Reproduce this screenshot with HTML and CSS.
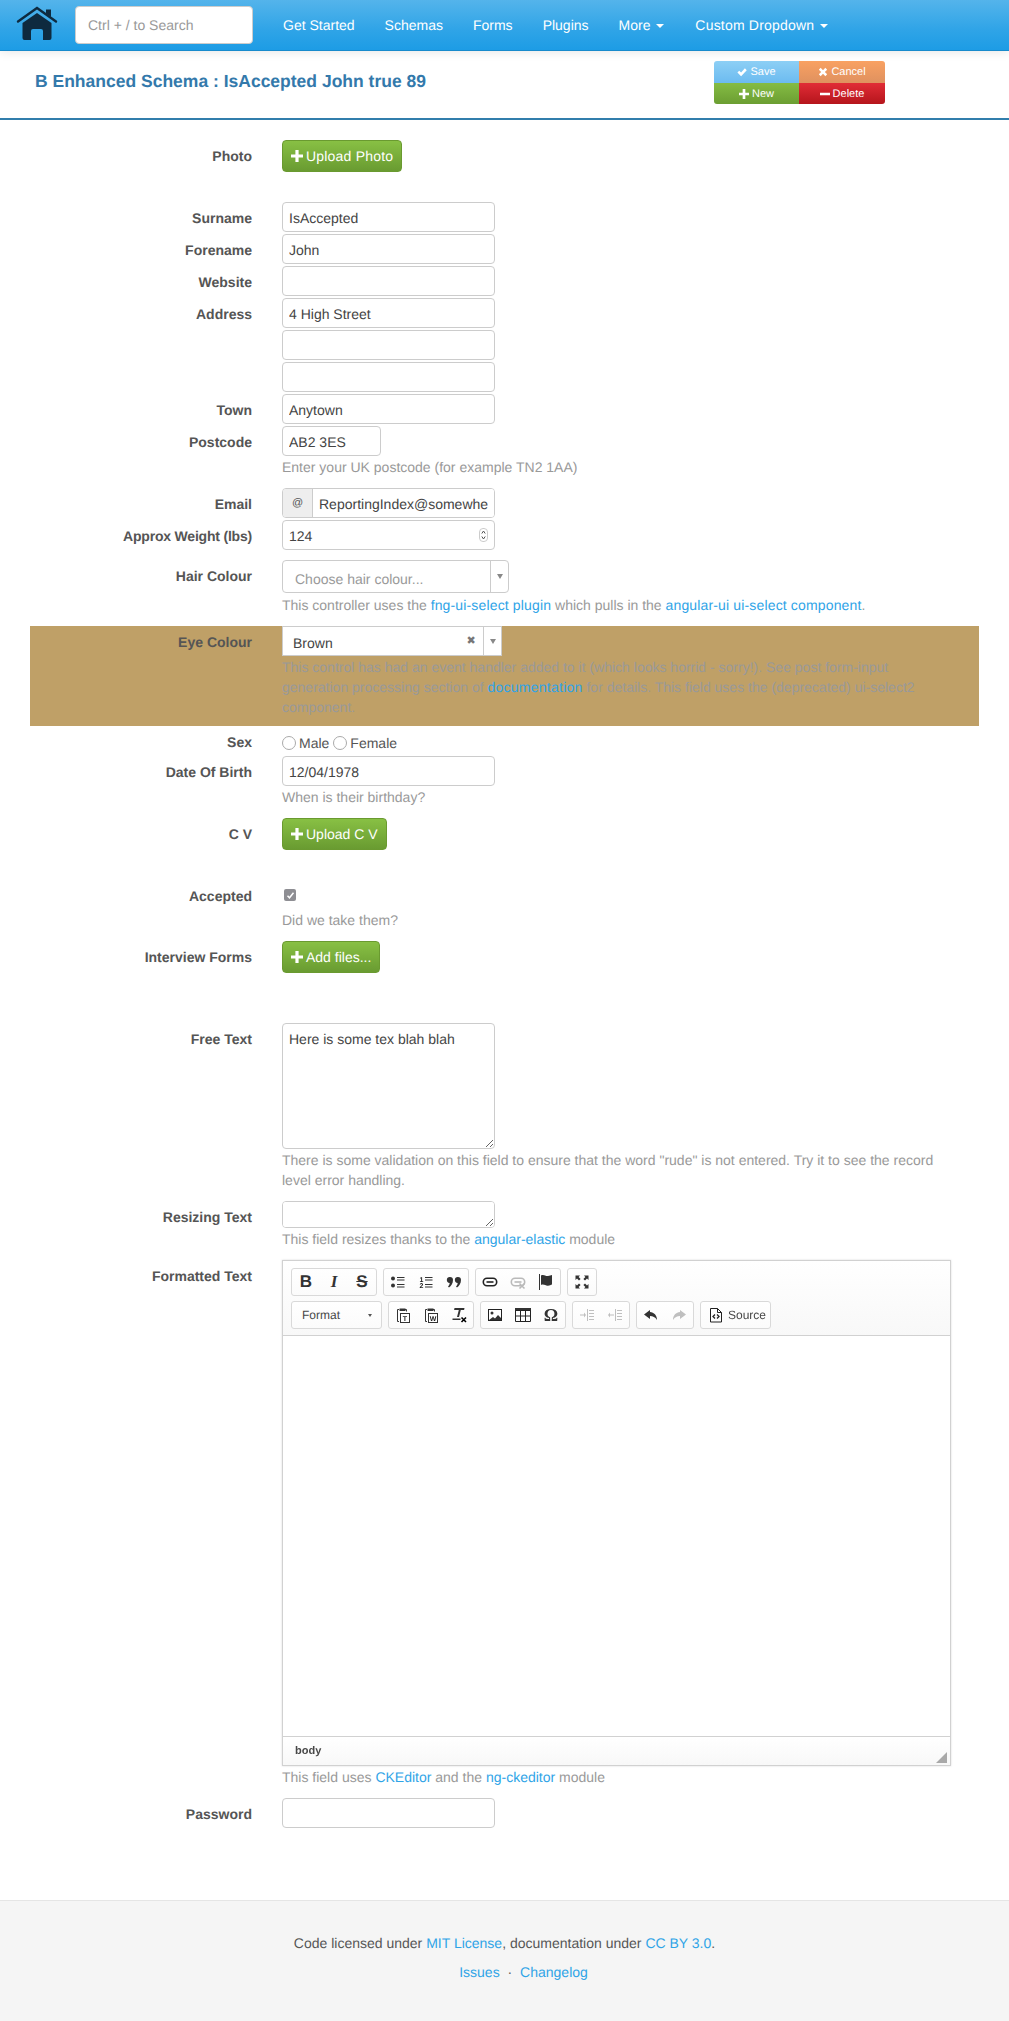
FILE: index.html
```html
<!DOCTYPE html>
<html lang="en">

<head>
    <meta charset="UTF-8">
    <title>B Enhanced Schema : IsAccepted John true 89</title>
    <link rel="stylesheet" href="styles.css">
</head>

<body>
    <svg class="sprite" aria-hidden="true">
        <symbol id="i-plus" viewBox="0 0 12 12"><path d="M4.400 0h3.200v4.400H12v3.200H7.600V12H4.400V7.600H0V4.400h4.400z"/></symbol>
        <symbol id="i-minus" viewBox="0 0 12 12"><path d="M0 4.400h12v3.200H0z"/></symbol>
        <symbol id="i-check" viewBox="0 0 12 12"><path d="M0.500 6.600l2.200-2.200 2.200 2.200 4.600-5 2.200 2.200-6.800 7.200z"/></symbol>
        <symbol id="i-cross" viewBox="0 0 12 12"><path d="M1 3.200l2.200-2.200L6 3.800 8.800 1 11 3.200 8.200 6 11 8.800 8.800 11 6 8.200 3.200 11 1 8.800 3.800 6z"/></symbol>
        <symbol id="i-link" viewBox="0 0 16 16"><rect x="1.300" y="4.300" width="13.400" height="7.400" rx="3.700" fill="none" stroke="#222" stroke-width="1.600"/><path d="M4.500 8h7" fill="none" stroke="#222" stroke-width="1.600"/></symbol>
    </svg>

    <nav class="navbar">
        <a class="brand" href="#">
            <svg width="42" height="36" viewBox="0 0 42 36">
                <path d="M2 15.500L21 2l19 13.500" fill="none" stroke="#0e2a3f" stroke-width="2.400" stroke-linecap="round"/>
                <path d="M30 3.500h5v7.500l-5-3.500z" fill="#0e2a3f"/>
                <path d="M21 7l14.500 10v15a2 2 0 0 1-2 2H27v-9a2 2 0 0 0-2-2h-8a2 2 0 0 0-2 2v9H8.500a2 2 0 0 1-2-2V17z" fill="#0e2a3f"/>
            </svg>
        </a>
        <input class="search" type="text" placeholder="Ctrl + / to Search">
        <ul class="nav-links">
            <li><a href="#">Get Started</a></li>
            <li><a href="#">Schemas</a></li>
            <li><a href="#">Forms</a></li>
            <li><a href="#">Plugins</a></li>
            <li><a href="#">More <b class="caret"></b></a></li>
            <li class="nav-last"><a href="#">Custom Dropdown <b class="caret"></b></a></li>
        </ul>
    </nav>

    <header class="page-head">
        <h1>B Enhanced Schema : IsAccepted John true 89</h1>
        <div class="actions">
            <a class="act act-save" href="#"><svg class="ico-s"><use href="#i-check"/></svg> Save</a>
            <a class="act act-cancel" href="#"><svg class="ico-s"><use href="#i-cross"/></svg> Cancel</a>
            <a class="act act-new" href="#"><svg class="ico-s"><use href="#i-plus"/></svg> New</a>
            <a class="act act-delete" href="#"><svg class="ico-s"><use href="#i-minus"/></svg> Delete</a>
        </div>
    </header>

    <form class="form">
        <div class="row row-upload">
            <label>Photo</label>
            <div class="ctl"><a class="btn-green btn-wide" href="#"><svg class="ico"><use href="#i-plus"/></svg>Upload Photo</a></div>
        </div>

        <div class="row"><label>Surname</label><div class="ctl"><input class="input" type="text" value="IsAccepted"></div></div>
        <div class="row"><label>Forename</label><div class="ctl"><input class="input" type="text" value="John"></div></div>
        <div class="row"><label>Website</label><div class="ctl"><input class="input" type="text"></div></div>
        <div class="row"><label>Address</label><div class="ctl"><input class="input" type="text" value="4 High Street"></div></div>
        <div class="row"><label></label><div class="ctl"><input class="input" type="text"></div></div>
        <div class="row"><label></label><div class="ctl"><input class="input" type="text"></div></div>
        <div class="row"><label>Town</label><div class="ctl"><input class="input" type="text" value="Anytown"></div></div>
        <div class="row">
            <label>Postcode</label>
            <div class="ctl">
                <input class="input input-short" type="text" value="AB2 3ES">
                <p class="help">Enter your UK postcode (for example TN2 1AA)</p>
            </div>
        </div>

        <div class="row">
            <label>Email</label>
            <div class="ctl">
                <div class="input-group">
                    <span class="addon">@</span>
                    <input type="text" value="ReportingIndex@somewhere.com">
                </div>
            </div>
        </div>
        <div class="row row-gap">
            <label class="label-tight">Approx Weight (lbs)</label>
            <div class="ctl">
                <div class="spin-wrap">
                    <input class="input" type="text" value="124">
                    <svg class="spin" width="9" height="14" viewBox="0 0 9 14">
                        <rect x="0.500" y="0.500" width="8" height="13" rx="3.500" fill="#fff" stroke="#ccc"/>
                        <path d="M2.800 5.500l1.700-2.500 1.700 2.500M2.800 8.500l1.700 2.500 1.700-2.500" fill="none" stroke="#555"/>
                    </svg>
                </div>
            </div>
        </div>

        <div class="row">
            <label>Hair Colour</label>
            <div class="ctl">
                <div class="select select-hair">
                    <span class="select-text placeholder">Choose hair colour...</span>
                    <span class="select-arrow"><b></b></span>
                </div>
                <p class="help help-tight">This controller uses the <a href="#">fng-ui-select plugin</a> which pulls in the <a href="#">angular-ui ui-select component</a>.</p>
            </div>
        </div>

        <div class="row row-band">
            <label>Eye Colour</label>
            <div class="ctl">
                <div class="select select-eye">
                    <span class="select-text">Brown</span>
                    <span class="select-clear">&#10006;</span>
                    <span class="select-arrow"><b></b></span>
                </div>
                <p class="help">This control has had an event handler added to it (which looks horrid - sorry!). See post form-input generation processing section of <a href="#">documentation</a> for details. This field uses the (deprecated) ui-select2 component.</p>
            </div>
        </div>

        <div class="row row-sex">
            <label>Sex</label>
            <div class="ctl radios">
                <input type="radio" name="sex" id="male"><label for="male">Male</label>
                <input type="radio" name="sex" id="female"><label for="female">Female</label>
            </div>
        </div>
        <div class="row">
            <label>Date Of Birth</label>
            <div class="ctl">
                <input class="input" type="text" value="12/04/1978">
                <p class="help">When is their birthday?</p>
            </div>
        </div>
        <div class="row row-upload">
            <label>C V</label>
            <div class="ctl"><a class="btn-green" href="#"><svg class="ico"><use href="#i-plus"/></svg>Upload C V</a></div>
        </div>
        <div class="row">
            <label>Accepted</label>
            <div class="ctl">
                <div class="check-line">
                    <span class="check"><svg width="9" height="9" viewBox="0 0 9 9"><path d="M1.500 4.800l2 2 4-5" fill="none" stroke="#fff" stroke-width="1.500"/></svg></span>
                </div>
                <p class="help help-flush">Did we take them?</p>
            </div>
        </div>
        <div class="row row-upload-lg">
            <label>Interview Forms</label>
            <div class="ctl"><a class="btn-green" href="#"><svg class="ico"><use href="#i-plus"/></svg>Add files...</a></div>
        </div>

        <div class="row">
            <label>Free Text</label>
            <div class="ctl">
                <textarea class="input area-free">Here is some tex blah blah</textarea>
                <p class="help">There is some validation on this field to ensure that the word "rude" is not entered. Try it to see the record level error handling.</p>
            </div>
        </div>
        <div class="row">
            <label>Resizing Text</label>
            <div class="ctl">
                <textarea class="input area-small"></textarea>
                <p class="help">This field resizes thanks to the <a href="#">angular-elastic</a> module</p>
            </div>
        </div>

        <div class="row">
            <label>Formatted Text</label>
            <div class="ctl">
                <div class="editor">
                    <div class="ed-top">
                        <div class="ed-row">
                            <div class="ed-group">
                                <span class="ed-btn ed-b">B</span>
                                <span class="ed-btn ed-i">I</span>
                                <span class="ed-btn ed-s">S</span>
                            </div>
                            <div class="ed-group">
                                <span class="ed-btn"><svg width="16" height="16" viewBox="0 0 16 16"><circle cx="3" cy="4.500" r="2"/><circle cx="3" cy="11.500" r="2"/><path d="M7 3h7.500v1H7zM7 5.500h7.500v1H7zM7 10h7.500v1H7zM7 12.500h7.500v1H7z"/></svg></span>
                                <span class="ed-btn"><svg width="16" height="16" viewBox="0 0 16 16"><text x="3.500" y="7.500" class="ed-mini">1</text><text x="3.500" y="14" class="ed-mini">2</text><path d="M7 3h7.500v1H7zM7 5.500h7.500v1H7zM7 10h7.500v1H7zM7 12.500h7.500v1H7z"/></svg></span>
                                <span class="ed-btn"><svg width="16" height="16" viewBox="0 0 16 16"><path d="M4 3a3 3 0 0 1 3 3c0 3.500-2 6-4 7.500L2 12.500C3 11.500 3.500 10.500 3.700 9A3 3 0 0 1 4 3zM12 3a3 3 0 0 1 3 3c0 3.500-2 6-4 7.500l-1-1c1-1 1.500-2 1.700-3.500A3 3 0 0 1 12 3z"/></svg></span>
                            </div>
                            <div class="ed-group">
                                <span class="ed-btn"><svg width="16" height="16"><use href="#i-link"/></svg></span>
                                <span class="ed-btn ed-off"><svg width="16" height="16" viewBox="0 0 16 16"><use href="#i-link" width="16" height="16"/><path d="M9.500 9.500l5 5m0-5l-5 5" fill="none" stroke="#222" stroke-width="1.600"/></svg></span>
                                <span class="ed-btn"><svg width="16" height="16" viewBox="0 0 16 16"><path d="M1 0h1v16H1zM3 1.500c3-1.500 4.500 1 7 .5 1.500-.2 3-.7 4-1v9.500c-1 .5-2.500 1-4 1.200-2.500.3-4-2-7-.7z"/></svg></span>
                            </div>
                            <div class="ed-group">
                                <span class="ed-btn"><svg width="16" height="16" viewBox="0 0 16 16"><path d="M1.500 1.500H6L4.600 3l2 2L5 6.600l-2-2L1.500 6zM14.500 1.500V6L13 4.600l-2 2L9.400 5l2-2L10 1.500zM1.500 14.500V10L3 11.400l2-2L6.600 11l-2 2L6 14.500zM14.500 14.500H10l1.400-1.500-2-2L11 9.400l2 2 1.500-1.400z"/></svg></span>
                            </div>
                        </div>
                        <div class="ed-row">
                            <div class="ed-group ed-combo"><span>Format</span><b class="ed-caret"></b></div>
                            <div class="ed-group">
                                <span class="ed-btn"><svg width="16" height="16" viewBox="0 0 16 16"><path d="M4 2.500H2.500v12H4M11.500 4.500v-2H10" fill="none" stroke="#333"/><path d="M4.500 1.500h6V4h-6z" fill="#333"/><rect x="5.500" y="6.500" width="9" height="9" fill="#fff" stroke="#333"/><text x="10" y="14" class="ed-mini">T</text></svg></span>
                                <span class="ed-btn"><svg width="16" height="16" viewBox="0 0 16 16"><path d="M4 2.500H2.500v12H4M11.500 4.500v-2H10" fill="none" stroke="#333"/><path d="M4.500 1.500h6V4h-6z" fill="#333"/><rect x="5.500" y="6.500" width="9" height="9" fill="#fff" stroke="#333"/><text x="10" y="14" class="ed-mini">W</text></svg></span>
                                <span class="ed-btn"><svg width="16" height="16" viewBox="0 0 16 16"><path d="M3.500 1h10l-.4 2H9.800L8 10H6l1.800-7H3.100zM1.500 11.500h8V13h-8z"/><path d="M10.500 10.500l4.500 4.500m0-4.500L10.500 15" fill="none" stroke="#000" stroke-width="1.600"/></svg></span>
                            </div>
                            <div class="ed-group">
                                <span class="ed-btn"><svg width="16" height="16" viewBox="0 0 16 16"><rect x="1.500" y="2.500" width="13" height="11" fill="#fff" stroke="#222"/><circle cx="5" cy="6" r="1.500"/><path d="M2 13l4-3 2 1.500L11 8l3 3v2z"/></svg></span>
                                <span class="ed-btn"><svg width="16" height="16" viewBox="0 0 16 16"><path d="M0 1h16v3H0z"/><path d="M.5 3.500h15v11H.500zM5.500 4v10M10.500 4v10M1 9h14" fill="none" stroke="#222"/></svg></span>
                                <span class="ed-btn ed-omega">&#937;</span>
                            </div>
                            <div class="ed-group">
                                <span class="ed-btn ed-off"><svg width="16" height="16" viewBox="0 0 16 16"><path d="M8 2h1v12H8zM10 3h5v1h-5zM10 6h5v1h-5zM10 9h5v1h-5zM10 12h5v1h-5zM1 7.500h4V5.500L7 8l-2 2.500v-2H1z"/></svg></span>
                                <span class="ed-btn ed-off"><svg width="16" height="16" viewBox="0 0 16 16"><path d="M8 2h1v12H8zM10 3h5v1h-5zM10 6h5v1h-5zM10 9h5v1h-5zM10 12h5v1h-5zM7 7.500H3V5.500L1 8l2 2.500v-2h4z"/></svg></span>
                            </div>
                            <div class="ed-group">
                                <span class="ed-btn"><svg width="16" height="16" viewBox="0 0 16 16"><path d="M7 3L1 7.500 7 12V9c3 0 5 1 7 4 0-5-3-7.500-7-8z"/></svg></span>
                                <span class="ed-btn ed-off"><svg width="16" height="16" viewBox="0 0 16 16"><path d="M9 3l6 4.500L9 12V9c-3 0-5 1-7 4 0-5 3-7.500 7-8z"/></svg></span>
                            </div>
                            <div class="ed-group ed-source">
                                <svg width="16" height="16" viewBox="0 0 16 16"><path d="M2.500 1.500h7l4 4v9.500h-11zM9.500 1.500v4h4" fill="none" stroke="#222"/><path d="M7 7.500l-2 2 2 2M9 7.500l2 2-2 2" fill="none" stroke="#222" stroke-width="1.300"/></svg>
                                <span>Source</span>
                            </div>
                        </div>
                    </div>
                    <div class="ed-body"></div>
                    <div class="ed-status">
                        <span>body</span>
                        <svg width="11" height="11" viewBox="0 0 11 11"><path d="M11 0v11H0z" fill="#a9a9a9"/></svg>
                    </div>
                </div>
                <p class="help">This field uses <a href="#">CKEditor</a> and the <a href="#">ng-ckeditor</a> module</p>
            </div>
        </div>

        <div class="row">
            <label>Password</label>
            <div class="ctl"><input class="input" type="password"></div>
        </div>
    </form>

    <footer class="footer">
        <p>Code licensed under <a href="#">MIT License</a>, documentation under <a href="#">CC BY 3.0</a>.</p>
        <p class="footer-links"><a href="#">Issues</a> <span class="dot">&middot;</span> <a href="#">Changelog</a></p>
    </footer>
</body>

</html>
```

FILE: styles.css
```css
* {
    box-sizing: border-box;
}

body {
    margin: 0;
    font-family: "Liberation Sans", Arial, sans-serif;
    font-size: 14px;
    line-height: 20px;
    color: #555;
    background-color: #fff;
    text-rendering: geometricPrecision;
}

input,
textarea {
    text-rendering: geometricPrecision;
}

a {
    color: #2fa4e7;
    text-decoration: none;
}

.sprite {
    display: none;
}

/* top bar */
.navbar {
    position: relative;
    display: flex;
    align-items: center;
    height: 51px;
    padding-left: 16px;
    background: linear-gradient(#54b4eb, #2fa4e7 60%, #1d9ce5);
    border-bottom: 1px solid #178acc;
    box-shadow: 0 1px 10px rgba(0, 0, 0, 0.1);
}

.brand {
    display: flex;
    width: 42px;
    margin-top: -3px;
}

.search {
    width: 178px;
    height: 38px;
    margin-left: 17px;
    margin-top: -1px;
    padding: 0 12px;
    border: 1px solid #ccc;
    border-radius: 4px;
    font: inherit;
    color: #555;
}

.search::placeholder {
    color: #999;
}

.nav-links {
    display: flex;
    margin: 0 0 0 15px;
    padding: 0;
    list-style: none;
}

.nav-links a {
    display: block;
    padding: 0 15px;
    color: #fff;
    white-space: nowrap;
}

.nav-last {
    margin-left: 1px;
    letter-spacing: 0.2px;
}

.caret {
    display: inline-block;
    margin-left: 2px;
    vertical-align: middle;
    border-top: 4px solid #fff;
    border-left: 4px solid transparent;
    border-right: 4px solid transparent;
}

/* record title and actions */
.page-head {
    display: flex;
    align-items: flex-start;
    justify-content: space-between;
    height: 69px;
    padding: 10px 124px 0 35px;
    border-bottom: 2px solid #317eac;
}

.page-head h1 {
    margin: 10px 0 0;
    font-size: 17.500px;
    font-weight: bold;
    line-height: 20px;
    color: #3379ab;
}

.actions {
    display: grid;
    grid-template-columns: 85px 86px;
    grid-template-rows: 22px 21px;
    border-radius: 3px;
    overflow: hidden;
}

.act {
    display: flex;
    align-items: center;
    justify-content: center;
    gap: 3px;
    font-size: 11px;
    color: #fff;
}

.act-save {
    background: linear-gradient(#8dcff5, #6cbbf0);
}

.act-cancel {
    background: linear-gradient(#f9a162, #df915f);
}

.act-new {
    background: linear-gradient(#85bc44, #6b9e32);
}

.act-delete {
    background: linear-gradient(#e12c36, #b5151c);
}

.ico-s {
    width: 10px;
    height: 10px;
    fill: #fff;
}

.ico {
    width: 12px;
    height: 12px;
    margin-right: 3px;
    fill: #fff;
}

/* form rows */
.form {
    margin: 0 30px;
    padding-top: 20px;
}

.row {
    display: grid;
    grid-template-columns: 222px 669px;
    column-gap: 30px;
    margin-bottom: 2px;
}

.row > label {
    padding-top: 6px;
    text-align: right;
    font-weight: bold;
}

.row > .label-tight {
    letter-spacing: -0.2px;
}

.row-upload {
    margin-bottom: 30px;
}

.row-upload-lg {
    margin-bottom: 50px;
}

.row-gap {
    margin-bottom: 10px;
}

.row-band {
    margin-bottom: 0;
    background-color: #bfa067;
    padding-bottom: 9px;
}

.row-band .help {
    margin-bottom: 0;
}

.row-band .help a {
    letter-spacing: 0.25px;
}

.row-sex {
    height: 28px;
}

.ctl {
    min-width: 0;
}

.input {
    display: block;
    width: 213px;
    height: 30px;
    padding: 5px 6px 3px;
    border: 1px solid #ccc;
    border-radius: 4px;
    font: inherit;
    color: #444;
    background-color: #fff;
}

.input-short {
    width: 99px;
}

.area-free {
    height: 126px;
}

.area-small {
    height: 27px;
}

.help {
    margin: 1px 0 9px;
    color: #999;
}

.help-tight {
    margin-top: 2px;
}

.help-tight a {
    letter-spacing: 0.15px;
}

.help-flush {
    margin-top: 0;
}

.btn-green {
    display: inline-flex;
    align-items: center;
    height: 32px;
    padding: 0 8px;
    border: 1px solid #6a9a30;
    border-radius: 4px;
    color: #fff;
    background: linear-gradient(#88c044, #699b31);
}

.btn-wide {
    letter-spacing: 0.2px;
}

/* email */
.input-group {
    display: flex;
    width: 213px;
    height: 30px;
    border: 1px solid #ccc;
    border-radius: 4px;
    overflow: hidden;
}

.addon {
    width: 30px;
    border-right: 1px solid #ccc;
    background-color: #eee;
    font-size: 11px;
    line-height: 28px;
    text-align: center;
}

.input-group input {
    flex: 1;
    min-width: 0;
    padding: 1px 6px 0;
    border: 0;
    font: inherit;
    color: #444;
}

/* number spinner */
.spin-wrap {
    position: relative;
    width: 213px;
}

.spin {
    position: absolute;
    right: 7px;
    top: 8px;
}

/* fake selects */
.select {
    display: flex;
    align-items: center;
    border: 1px solid #ccc;
    background-color: #fff;
}

.select-hair {
    width: 227px;
    height: 33px;
    border-radius: 4px;
}

.select-eye {
    width: 220px;
    height: 30px;
    border-radius: 0;
}

.select-text {
    flex: 1;
    padding-left: 10px;
    padding-top: 4px;
    color: #444;
}

.placeholder {
    padding-left: 12px;
    color: #999;
}

.select-clear {
    width: 24px;
    font-size: 11px;
    text-align: center;
    color: #777;
}

.select-arrow {
    display: flex;
    align-items: center;
    justify-content: center;
    width: 18px;
    height: 100%;
    border-left: 1px solid #ccc;
}

.select-arrow b {
    border-top: 5px solid #888;
    border-left: 3px solid transparent;
    border-right: 3px solid transparent;
}

/* radios and checkbox */
.radios {
    display: flex;
    align-items: center;
    height: 20px;
    margin-top: 7px;
}

.radios input {
    appearance: none;
    width: 14px;
    height: 14px;
    margin: 0 3px 0 0;
    border: 1px solid #aaa;
    border-radius: 50%;
    background-color: #fff;
}

.radios label {
    margin-right: 4px;
}

.check-line {
    display: flex;
    align-items: center;
    height: 30px;
    padding-left: 2px;
}

.check {
    display: flex;
    align-items: center;
    justify-content: center;
    width: 12px;
    height: 12px;
    border-radius: 2px;
    background-color: #8e8e93;
}

/* rich text editor */
.editor {
    width: 669px;
    height: 506px;
    display: flex;
    flex-direction: column;
    border: 1px solid #d1d1d1;
    box-shadow: 0 0 2px rgba(0, 0, 0, 0.15);
}

.ed-top {
    height: 75px;
    padding: 7px 8px 0;
    border-bottom: 1px solid #d1d1d1;
    background: linear-gradient(#fff, #f8f8f8);
}

.ed-row {
    display: flex;
    gap: 6px;
    height: 28px;
    margin-bottom: 5px;
}

.ed-group {
    display: flex;
    height: 28px;
    border: 1px solid #d9d9d9;
    border-radius: 3px;
    background: linear-gradient(#fff, #fbfbfb);
}

.ed-btn {
    display: flex;
    align-items: center;
    justify-content: center;
    width: 28px;
    height: 26px;
    color: #333;
    fill: #333;
}

.ed-b,
.ed-i,
.ed-s {
    font-family: "Liberation Serif", serif;
    font-weight: bold;
    font-size: 17px;
}

.ed-b {
    font-family: "Liberation Sans", sans-serif;
}

.ed-i {
    font-style: italic;
}

.ed-s {
    font-family: "Liberation Sans", sans-serif;
    text-decoration: line-through;
}

.ed-off {
    opacity: 0.3;
}

.ed-omega {
    font-family: "Liberation Serif", serif;
    font-weight: bold;
    font-size: 18px;
}

.ed-mini {
    font-size: 7px;
    font-weight: bold;
    text-anchor: middle;
    fill: #222;
}

.ed-combo {
    align-items: center;
    justify-content: space-between;
    width: 91px;
    padding: 0 9px 0 10px;
    font-size: 12px;
    color: #484848;
}

.ed-caret {
    border-top: 3px solid #555;
    border-left: 2.500px solid transparent;
    border-right: 2.500px solid transparent;
}

.ed-source {
    align-items: center;
    gap: 4px;
    width: 71px;
    padding-left: 7px;
    font-size: 12px;
    color: #484848;
}

.ed-body {
    flex: 1;
    background-color: #fff;
}

.ed-status {
    display: flex;
    align-items: center;
    justify-content: space-between;
    height: 29px;
    padding: 0 3px 0 12px;
    border-top: 1px solid #d1d1d1;
    background: linear-gradient(#fff, #f8f8f8);
    font-size: 11px;
    font-weight: bold;
    color: #484848;
}

.ed-status svg {
    align-self: flex-end;
    margin-bottom: 2px;
}

/* footer */
.footer {
    height: 122px;
    margin-top: 72px;
    padding-top: 32px;
    border-top: 1px solid #e5e5e5;
    background-color: #f5f5f5;
    text-align: center;
}

.footer p {
    margin: 0 0 9px;
}

.footer-links {
    padding-left: 38px;
}

.dot {
    margin: 0 4px;
}
```
